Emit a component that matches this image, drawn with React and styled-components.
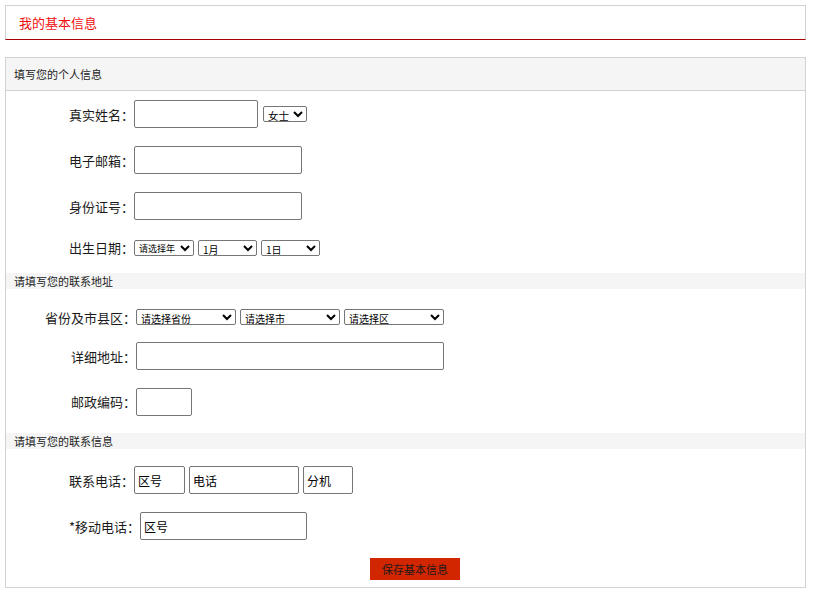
import React from "react";
import styled, { createGlobalStyle } from "styled-components";

const Global = createGlobalStyle`
  html, body { margin: 0; padding: 0; background: #fff; }
  body { font-family: "Noto Sans CJK SC", "Liberation Sans", sans-serif; color: #222; }
  * { box-sizing: border-box; }
`;

const Page = styled.div`
  width: 801px;
  margin: 5px 0 0 5px;
`;

const TitleBar = styled.div`
  height: 35px;
  border: 1px solid #d2d2d2;
  border-bottom: 1px solid #a80000;
  display: flex;
  align-items: center;
  padding-left: 13px;
  font-size: 13px;
  color: #f01010;
`;

const Panel = styled.div`
  margin-top: 17px;
  border: 1px solid #d2d2d2;
  padding-bottom: 7px;
`;

const PanelHead = styled.div`
  height: 33px;
  background: #f5f5f5;
  border-bottom: 1px solid #d2d2d2;
  display: flex;
  align-items: center;
  padding-left: 8px;
  font-size: 11px;
  color: #222;
`;

const Band = styled.div`
  height: 16px;
  background: #f5f5f5;
  display: flex;
  align-items: center;
  padding-left: 8px;
  font-size: 11px;
  color: #222;
`;

const Section = styled.div`
  padding-top: ${(p) => p.$top || 0}px;
  padding-bottom: ${(p) => p.$bottom || 0}px;
`;

const Row = styled.div`
  height: ${(p) => p.$h || 46}px;
  display: flex;
  align-items: center;
`;

const Label = styled.div`
  width: ${(p) => p.$w}px;
  text-align: right;
  font-size: 13px;
  white-space: nowrap;
  color: #1a1a1a;
  flex: none;
`;

const Controls = styled.div`
  display: flex;
  align-items: center;
  gap: ${(p) => (p.$gap == null ? 5 : p.$gap)}px;
`;

const TextInput = styled.input`
  width: ${(p) => p.$w}px;
  height: 28px;
  border: 1px solid #767676;
  border-radius: 2px;
  padding: 0 3px;
  font-family: "Noto Sans CJK SC", sans-serif;
  font-size: 12px;
  color: #000;
  background: #fff;
  outline: none;
  flex: none;
`;

const Select = styled.select`
  width: ${(p) => p.$w}px;
  height: ${(p) => p.$h || 16}px;
  font-family: "Noto Sans CJK SC", sans-serif;
  font-size: ${(p) => p.$fs || 10}px;
  line-height: 1;
  color: #000;
  padding: 0;
  border: 1px solid #767676;
  border-radius: 2px;
  background: #fff;
  flex: none;
`;

const ButtonRow = styled.div`
  margin-top: 9px;
  padding-left: 364px;
  display: flex;
`;

const SaveButton = styled.button`
  width: 90px;
  height: 22px;
  border: none;
  background: #d22600;
  color: #1a1a1a;
  font-family: "Noto Sans CJK SC", sans-serif;
  font-size: 11px;
  padding: 0;
  cursor: pointer;
`;

export default function App() {
  return (
    <>
      <Global />
      <Page>
        <TitleBar>我的基本信息</TitleBar>
        <Panel>
          <PanelHead>填写您的个人信息</PanelHead>
          <Section $bottom={7}>
            <Row>
              <Label $w={128}>真实姓名：</Label>
              <Controls $gap={5}>
                <TextInput $w={124} />
                <Select $w={44} $h={16} $fs={10.5} defaultValue="女士">
                  <option>女士</option>
                  <option>先生</option>
                </Select>
              </Controls>
            </Row>
            <Row>
              <Label $w={128}>电子邮箱：</Label>
              <TextInput $w={168} />
            </Row>
            <Row>
              <Label $w={128}>身份证号：</Label>
              <TextInput $w={168} />
            </Row>
            <Row $h={37}>
              <Label $w={128}>出生日期：</Label>
              <Controls $gap={4}>
                <Select $w={60} $fs={9}>
                  <option>请选择年</option>
                </Select>
                <Select $w={59}>
                  <option>1月</option>
                </Select>
                <Select $w={59}>
                  <option>1日</option>
                </Select>
              </Controls>
            </Row>
          </Section>
          <Band>请填写您的联系地址</Band>
          <Section $top={12} $bottom={9}>
            <Row $h={32}>
              <Label $w={130}>省份及市县区：</Label>
              <Controls $gap={4}>
                <Select $w={100}>
                  <option>请选择省份</option>
                </Select>
                <Select $w={100}>
                  <option>请选择市</option>
                </Select>
                <Select $w={100}>
                  <option>请选择区</option>
                </Select>
              </Controls>
            </Row>
            <Row>
              <Label $w={130}>详细地址：</Label>
              <TextInput $w={308} />
            </Row>
            <Row $h={45}>
              <Label $w={130}>邮政编码：</Label>
              <TextInput $w={56} />
            </Row>
          </Section>
          <Band>请填写您的联系信息</Band>
          <Section $top={8}>
            <Row>
              <Label $w={128}>联系电话：</Label>
              <Controls $gap={4}>
                <TextInput $w={51} defaultValue="区号" />
                <TextInput $w={110} defaultValue="电话" />
                <TextInput $w={50} defaultValue="分机" />
              </Controls>
            </Row>
            <Row>
              <Label $w={134}>*移动电话：</Label>
              <TextInput $w={167} defaultValue="区号" />
            </Row>
          </Section>
          <ButtonRow>
            <SaveButton>保存基本信息</SaveButton>
          </ButtonRow>
        </Panel>
      </Page>
    </>
  );
}
